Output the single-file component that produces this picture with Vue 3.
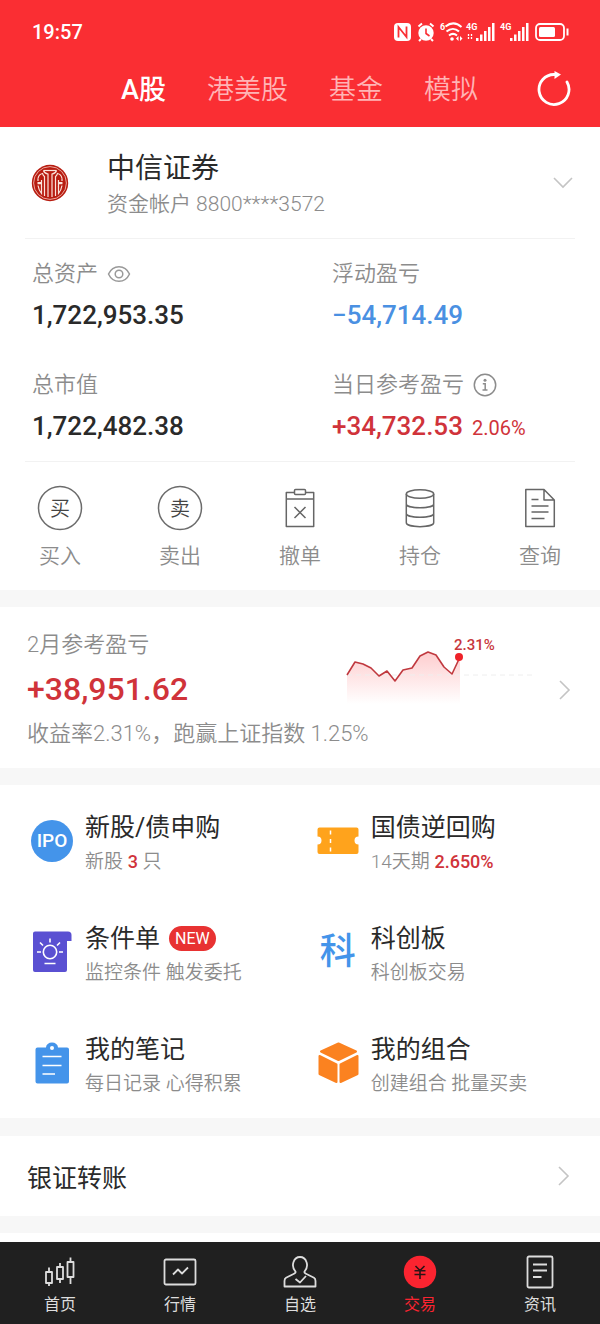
<script setup>
import { ref } from 'vue'

const markets = ['A股', '港美股', '基金', '模拟']
const market = ref('A股')

const actions = [
  { id: 'buy', label: '买入', glyph: '买' },
  { id: 'sell', label: '卖出', glyph: '卖' },
  { id: 'cancel', label: '撤单' },
  { id: 'hold', label: '持仓' },
  { id: 'query', label: '查询' },
]

const services = [
  { id: 'ipo', title: '新股/债申购', parts: [{ t: '新股 ' }, { t: '3', hot: true }, { t: ' 只' }] },
  { id: 'repo', title: '国债逆回购', parts: [{ t: '14天期 ' }, { t: '2.650%', hot: true }] },
  { id: 'cond', title: '条件单', badge: 'NEW', parts: [{ t: '监控条件 触发委托' }] },
  { id: 'star', title: '科创板', parts: [{ t: '科创板交易' }] },
  { id: 'note', title: '我的笔记', parts: [{ t: '每日记录 心得积累' }] },
  { id: 'combo', title: '我的组合', parts: [{ t: '创建组合 批量买卖' }] },
]

const navs = [
  { id: 'home', label: '首页' },
  { id: 'quote', label: '行情' },
  { id: 'fav', label: '自选' },
  { id: 'trade', label: '交易' },
  { id: 'news', label: '资讯' },
]
const current = ref('trade')
</script>

<template>
  <div class="page">
    <header class="top">
      <div class="status">
        <span class="time">19:57</span>
        <svg class="status-icons" width="178" height="22" viewBox="0 0 178 22" aria-hidden="true">
          <rect x="1" y="2" width="17" height="18" rx="4" fill="#fff" />
          <path d="M5.500 16.500V6L13.500 16V5.500" fill="none" stroke="#fa2e33" stroke-width="1.800" />
          <circle cx="33" cy="12" r="7.700" fill="#fff" />
          <path d="M25.500 5.500l3.500-3M40.500 5.500l-3.500-3M28 18l-2 2M38 18l2 2" stroke="#fff" stroke-width="2" fill="none" />
          <path d="M33 7.500V12.500l3.500 2.500" stroke="#fa2e33" stroke-width="1.600" fill="none" />
          <text x="47" y="9" class="tiny">6</text>
          <g fill="none" stroke="#fff" stroke-width="2">
            <path d="M52.500 5.500c5-4 11-4 16 .500" />
            <path d="M53.500 10.500c4-3.500 9-3.500 12.500 0" />
            <path d="M56 14.500c2.500-2 5.500-2 8 0" />
          </g>
          <circle cx="59" cy="18" r="1.800" fill="#fff" />
          <path d="M63 17.500l2.500-2.500v5zM69.500 17.500L67 15v5z" fill="#fff" />
          <text x="73" y="9" class="tiny">4G</text>
          <path d="M75.500 13v6M78.500 13v6" stroke="#fff" stroke-width="1.300" stroke-dasharray="2 1" />
          <g fill="#fff">
            <rect x="83" y="17" width="2.500" height="3" /><rect x="87" y="13.500" width="2.500" height="6.500" />
            <rect x="91" y="10" width="2.500" height="10" /><rect x="95" y="6" width="2.500" height="14" />
            <rect x="99" y="2" width="2.500" height="18" />
            <rect x="117" y="17" width="2.500" height="3" /><rect x="121" y="13.500" width="2.500" height="6.500" />
            <rect x="125" y="10" width="2.500" height="10" /><rect x="129" y="6" width="2.500" height="14" />
            <rect x="133" y="2" width="2.500" height="18" />
          </g>
          <text x="107" y="9" class="tiny">4G</text>
          <rect x="143" y="3" width="28" height="16" rx="4" fill="none" stroke="#fff" stroke-width="1.800" />
          <rect x="146" y="6" width="16" height="10" rx="1.500" fill="#fff" />
          <path d="M174.500 7.500v7" stroke="#fff" stroke-width="2" />
        </svg>
      </div>
      <div class="tabs">
        <button
          v-for="m in markets"
          :key="m"
          type="button"
          class="tab"
          :class="{ on: m === market }"
          @click="market = m"
        >{{ m }}</button>
        <button type="button" class="refresh" aria-label="刷新">
          <svg width="36" height="38" viewBox="0 0 36 38" aria-hidden="true">
            <path d="M31 11A15 15 0 1 1 18.500 3.500" fill="none" stroke="#fff" stroke-width="2.800" stroke-linecap="round" />
            <path d="M18.500 0l6.500 3.500-6.500 4.400z" fill="#fff" />
          </svg>
        </button>
      </div>
    </header>

    <main class="body">
      <section class="card">
        <button type="button" class="account">
          <svg class="logo" width="38" height="38" viewBox="0 0 38 38" aria-hidden="true">
            <circle cx="19" cy="19" r="18.200" fill="#b81c10" />
            <circle cx="19" cy="19" r="16.400" fill="none" stroke="#eeb8ae" stroke-width=".900" />
            <g fill="none" stroke="#fbe4dc" stroke-width="1.200">
              <path d="M12.500 6.500c.500 2 1.500 3 4.500 3.500V33M25.500 6.500c-.500 2-1.500 3-4.500 3.500V33" />
              <path d="M12.500 6.500h13" />
              <path d="M7 14.500c.500-3 2-4.500 4.500-5 .700 2 1.200 2.500 2 3V32M31 14.500c-.500-3-2-4.500-4.500-5-.700 2-1.200 2.500-2 3V32" />
              <path d="M7 14.500v2.500M7 21.500c.500 3 1.500 5.500 3.500 8V22M31 14.500v2.500M31 21.500c-.500 3-1.500 5.500-3.500 8V22" />
              <path d="M6.500 19.200h4.500M27 19.200h4.500" stroke-width="2.200" />
              <path d="M10.500 16v6.500M27.500 16v6.500" />
            </g>
          </svg>
          <span class="who">
            <span class="broker">中信证券</span>
            <span class="acct">资金帐户 8800****3572</span>
          </span>
          <svg class="chev-down" width="20" height="12" viewBox="0 0 20 12" aria-hidden="true">
            <path d="M1 1l9 9 9-9" fill="none" stroke="#c4c4c4" stroke-width="1.600" />
          </svg>
        </button>

        <dl class="assets">
          <div class="asset">
            <dt>总资产
              <svg width="24" height="18" viewBox="0 0 24 18" aria-hidden="true">
                <g fill="none" stroke="#999" stroke-width="1.500">
                  <path d="M1.500 9C6-.800 18-.800 22.500 9 18 18.800 6 18.800 1.500 9z" /><circle cx="12" cy="9" r="3.800" />
                </g>
              </svg>
            </dt>
            <dd>1,722,953.35</dd>
          </div>
          <div class="asset">
            <dt>浮动盈亏</dt>
            <dd class="down">−54,714.49</dd>
          </div>
          <div class="asset">
            <dt>总市值</dt>
            <dd>1,722,482.38</dd>
          </div>
          <div class="asset">
            <dt>当日参考盈亏
              <svg width="24" height="24" viewBox="0 0 24 24" aria-hidden="true">
                <circle cx="12" cy="12" r="10.700" fill="none" stroke="#8c8c8c" stroke-width="1.500" />
                <circle cx="12" cy="7.200" r="1.500" fill="#8c8c8c" />
                <path d="M9.800 10.800h2.400v6.200M9.500 17h5" fill="none" stroke="#8c8c8c" stroke-width="1.500" />
              </svg>
            </dt>
            <dd class="up">+34,732.53<small>2.06%</small></dd>
          </div>
        </dl>

        <div class="actions">
          <button v-for="a in actions" :key="a.id" type="button" class="action">
            <svg width="46" height="46" viewBox="0 0 46 46" aria-hidden="true">
              <g v-if="a.glyph">
                <circle cx="23" cy="23" r="21.500" fill="none" stroke="#6c6c6c" stroke-width="1.500" />
                <text x="23" y="31" text-anchor="middle" class="ring-text">{{ a.glyph }}</text>
              </g>
              <g v-else fill="none" stroke="#666" stroke-width="1.500" stroke-linejoin="round">
                <template v-if="a.id === 'cancel'">
                  <path d="M17.500 7.500H9.300v34h27.400v-34H28.500M9.300 14h27.400" />
                  <rect x="17.500" y="4.500" width="11" height="5" rx="1" />
                  <path d="M17.500 22l11 11M28.500 22l-11 11" />
                </template>
                <template v-else-if="a.id === 'hold'">
                  <ellipse cx="23" cy="9" rx="13.700" ry="4.200" />
                  <path d="M9.300 9v28.500c0 5.500 27.400 5.500 27.400 0V9M9.300 19c0 5 27.400 5 27.400 0M9.300 28.500c0 5 27.400 5 27.400 0" />
                </template>
                <template v-else>
                  <path d="M27 4.500H8.800v37h28.500V15zM27 4.500V15h10.300" />
                  <path d="M14.500 14.500h7M14.500 21h17M14.500 27h17M14.500 33.500h13" />
                </template>
              </g>
            </svg>
            <span class="action-label">{{ a.label }}</span>
          </button>
        </div>
      </section>

      <section class="card">
        <a href="#month" class="month">
          <span class="m-label">2月参考盈亏</span>
          <strong class="m-value">+38,951.62</strong>
          <span class="m-note">收益率2.31%，跑赢上证指数 1.25%</span>
          <svg class="spark" width="192" height="76" viewBox="0 0 192 76" role="img" aria-label="本月收益走势">
            <defs>
              <linearGradient id="fade" x1="0" y1="0" x2="0" y2="1">
                <stop offset="0" stop-color="#fa2e33" stop-opacity=".240" />
                <stop offset="1" stop-color="#fa2e33" stop-opacity="0" />
              </linearGradient>
            </defs>
            <path d="M1 45L9 32l8 2 8 4 8 8 8-5 8 10 8-11 9-2 8-12 8-4 8 3 8 12 8 7 8-17V74H1z" fill="url(#fade)" />
            <path d="M1 45H190" stroke="#eee" stroke-width="1" stroke-dasharray="5 4" />
            <path d="M1 45L9 32l8 2 8 4 8 8 8-5 8 10 8-11 9-2 8-12 8-4 8 3 8 12 8 7 8-17" fill="none" stroke="#c0393f" stroke-width="1.600" stroke-linejoin="round" />
            <circle cx="113" cy="27" r="4" fill="#ee2229" />
            <text x="108" y="20" class="spark-text">2.31%</text>
          </svg>
          <svg class="chev" width="12" height="20" viewBox="0 0 12 20" aria-hidden="true">
            <path d="M1 1l9 9-9 9" fill="none" stroke="#c4c4c4" stroke-width="1.600" />
          </svg>
        </a>
      </section>

      <section class="card services">
        <a v-for="s in services" :key="s.id" :href="'#' + s.id" class="service">
          <span v-if="s.id === 'ipo'" class="s-icon ipo" aria-hidden="true">IPO</span>
          <span v-else-if="s.id === 'star'" class="s-icon ke" aria-hidden="true">科</span>
          <svg v-else class="s-icon" width="42" height="42" viewBox="0 0 42 42" aria-hidden="true">
            <template v-if="s.id === 'repo'">
              <path d="M2.500 7.500h37a2 2 0 0 1 2 2v7a4 4 0 0 0 0 8v7.500a2 2 0 0 1-2 2h-37a2 2 0 0 1-2-2v-7.500a4 4 0 0 0 0-8v-7a2 2 0 0 1 2-2z" fill="#ffa31c" />
              <path d="M13.500 10.500v22" stroke="#fff" stroke-width="1.500" stroke-dasharray="4 4.500" />
            </template>
            <template v-else-if="s.id === 'cond'">
              <path d="M4 .500h33a3.500 3.500 0 0 1 3.500 3.500v6H36v29a2 2 0 0 1-2 2H4a2 2 0 0 1-2-2v-36.500a2 2 0 0 1 2-2z" fill="#5a50d2" />
              <g fill="none" stroke="#fff" stroke-width="1.600">
                <circle cx="19" cy="21" r="6.700" />
                <path d="M19 7.500v4M6 21h4M28 21h4M9 11.500l3 3M29 11.500l-3 3M13.500 32.500h11" />
              </g>
            </template>
            <template v-else-if="s.id === 'note'">
              <path d="M6.500 5.500H15a6 5 0 0 1 12 0h9a2 2 0 0 1 2 2v32a2 2 0 0 1-2 2h-29.500a2 2 0 0 1-2-2v-32a2 2 0 0 1 2-2z" fill="#4494ea" />
              <circle cx="21" cy="6" r="2" fill="#fff" />
              <path d="M11.500 14.500h19M11.500 23.500h19M11.500 32h12.500" stroke="#fff" stroke-width="1.600" />
            </template>
            <template v-else>
              <g fill="#fb8220" stroke="#fb8220" stroke-width="2" stroke-linejoin="round">
                <path d="M21.500 1.500L39 9.500 21.500 18 4 9.500z" />
                <path d="M2.500 14L19.500 22.500v17.500L2.500 32z" />
                <path d="M40.500 14L23.500 22.500v17.500l17-8z" />
              </g>
            </template>
          </svg>
          <span class="s-text">
            <span class="s-title">{{ s.title }}<em v-if="s.badge" class="badge">{{ s.badge }}</em></span>
            <span class="s-sub"><span v-for="(p, i) in s.parts" :key="i" :class="{ hot: p.hot }">{{ p.t }}</span></span>
          </span>
        </a>
      </section>

      <section class="card">
        <a href="#transfer" class="transfer">
          <span>银证转账</span>
          <svg width="12" height="20" viewBox="0 0 12 20" aria-hidden="true">
            <path d="M1 1l9 9-9 9" fill="none" stroke="#c4c4c4" stroke-width="1.600" />
          </svg>
        </a>
      </section>

      <div class="card next"></div>
    </main>

    <nav class="nav">
      <button
        v-for="n in navs"
        :key="n.id"
        type="button"
        class="nav-item"
        :class="{ on: n.id === current }"
        @click="current = n.id"
      >
        <svg width="34" height="34" viewBox="0 0 34 34" aria-hidden="true">
          <g fill="none" stroke="currentColor" stroke-width="1.800" stroke-linejoin="round">
            <template v-if="n.id === 'home'">
              <rect x="3" y="17" width="6" height="11" /><path d="M6 12.500V17M6 28v3" />
              <rect x="14" y="12" width="6" height="12" /><path d="M17 8v4M17 24v4" />
              <rect x="24.500" y="7" width="6" height="15" /><path d="M27.500 2.500V7M27.500 22v7" />
            </template>
            <template v-else-if="n.id === 'quote'">
              <rect x="1.500" y="4.500" width="31" height="25" rx="1.500" />
              <path d="M10 19.500l5-5 4 4 6-6" />
            </template>
            <template v-else-if="n.id === 'fav'">
              <path d="M12.500 16.500C7.500 11 10.500 2 17 2s9.500 9 4.500 14.500c-.500 1.500 1 2.300 3 3l6.500 3.200c1.300.700 1.500 2 1.500 3.300v5.500h-31V26c0-1.300.200-2.600 1.500-3.300L9.500 19.500c2-.700 3.500-1.500 3-3z" />
              <path d="M12.500 24l4.500 3.500 6-6.500" />
            </template>
            <template v-else-if="n.id === 'news'">
              <rect x="4.500" y="1.500" width="25" height="31" rx="1.500" />
              <path d="M10 9.500h14M10 15.500h14M10 22h8.500" />
            </template>
            <template v-else>
              <circle cx="17" cy="17" r="16.200" fill="#fb2430" stroke="none" />
              <path d="M12.500 11l4.500 4.500 4.500-4.500M17 15.500v8.500M11.500 15.700h11M11.500 19.500h11" stroke="#2a1416" stroke-width="1.600" />
            </template>
          </g>
        </svg>
        <span>{{ n.label }}</span>
      </button>
    </nav>
  </div>
</template>

<style>
body {
  margin: 0;
  background: #f7f7f7;
}
</style>

<style scoped>
.page {
  display: flex;
  flex-direction: column;
  min-height: 100vh;
  font-family: Roboto, "Noto Sans CJK SC", sans-serif;
  color: #2a2a2a;
  background: #f7f7f7;
}
button {
  margin: 0;
  padding: 0;
  border: 0;
  background: none;
  font: inherit;
  color: inherit;
  cursor: pointer;
}
a {
  color: inherit;
  text-decoration: none;
}
svg {
  display: block;
  flex: none;
}
.top {
  background: #fa2e33;
  color: #fff;
}
.status {
  display: flex;
  justify-content: space-between;
  align-items: center;
  height: 24px;
  padding: 20px 29px 0 32px;
}
.time {
  font-size: 20px;
  font-weight: 500;
}
.tiny {
  font-size: 9px;
  font-weight: 700;
  fill: #fff;
}
.tabs {
  display: flex;
  align-items: center;
  gap: 41px;
  height: 83px;
  padding: 8px 28px 0 121px;
  box-sizing: border-box;
}
.tab {
  font-size: 27px;
  line-height: 40px;
  color: #ffb4b5;
  font-weight: 350;
}
.tab.on {
  color: #fff;
  font-weight: 500;
}
.refresh {
  margin-left: auto;
}
.card {
  background: #fff;
}
.body {
  flex: 1;
  display: flex;
  flex-direction: column;
  gap: 17px;
}
.account {
  display: flex;
  align-items: center;
  width: 100%;
  height: 111px;
  padding: 0 27px 0 31px;
  text-align: left;
}
.who {
  flex: 1;
  display: flex;
  flex-direction: column;
  gap: 2px;
  padding: 5px 0 0 38px;
}
.broker {
  font-size: 28px;
  line-height: 36px;
}
.acct {
  font-size: 21px;
  line-height: 30px;
  color: #8c8c8c;
  font-weight: 350;
}
.assets {
  display: grid;
  grid-template-columns: 1fr 1fr;
  row-gap: 39px;
  margin: 0 25px;
  padding: 20px 0 17px;
  border: solid #f2f2f2;
  border-width: 1px 0;
}
.asset {
  padding-left: 7px;
}
.asset:nth-child(even) {
  padding-left: 32px;
}
.asset dt {
  display: flex;
  align-items: center;
  gap: 9px;
  font-size: 22px;
  line-height: 30px;
  color: #8c8c8c;
  font-weight: 350;
}
.asset dd {
  margin: 10px 0 0;
  font-size: 26px;
  line-height: 32px;
  font-weight: 500;
  white-space: nowrap;
}
.asset dd.down {
  color: #4a90e2;
}
.asset dd.up {
  color: #d0333a;
}
.asset small {
  margin-left: 9px;
  font-size: 20px;
  font-weight: 400;
}
.actions {
  display: grid;
  grid-template-columns: repeat(5, 1fr);
  padding: 23px 0 20px;
}
.action {
  display: flex;
  flex-direction: column;
  align-items: center;
  gap: 11px;
}
.ring-text {
  font-size: 20px;
  font-weight: 350;
  fill: #444;
}
.action-label {
  font-size: 21px;
  line-height: 28px;
  color: #8c8c8c;
  font-weight: 350;
}
.month {
  display: grid;
  grid-template-columns: 1fr 192px 12px;
  column-gap: 21px;
  padding: 23px 29px 19px 27px;
}
.m-label,
.m-note {
  font-size: 22px;
  line-height: 30px;
  color: #8c8c8c;
  font-weight: 350;
}
.m-value {
  margin: 11px 0 12px;
  grid-row: 2;
  font-size: 32px;
  line-height: 36px;
  font-weight: 500;
  color: #d0333a;
}
.m-note {
  grid-row: 3;
  grid-column: 1 / 3;
}
.spark {
  grid-row: 1 / 3;
  grid-column: 2;
}
.spark-text {
  font-size: 15px;
  font-weight: 500;
  fill: #c8373d;
}
.chev {
  grid-row: 1 / 4;
  grid-column: 3;
  align-self: center;
}
.services {
  display: grid;
  grid-template-columns: 10fr 11fr;
  margin-bottom: 1px;
}
.service {
  display: flex;
  align-items: center;
  gap: 12px;
  height: 111px;
  padding-left: 31px;
}
.s-icon {
  flex: none;
  width: 42px;
  height: 42px;
}
.ipo {
  display: flex;
  align-items: center;
  justify-content: center;
  border-radius: 50%;
  background: #4494ea;
  color: #fff;
  font-size: 19px;
  font-weight: 500;
}
.ke {
  display: flex;
  align-items: center;
  justify-content: center;
  color: #4494ea;
  font-size: 36px;
  line-height: 42px;
  font-weight: 500;
}
.s-text {
  display: flex;
  flex-direction: column;
  gap: 5px;
  padding-top: 5px;
}
.s-title {
  display: flex;
  align-items: center;
  gap: 9px;
  font-size: 25px;
  line-height: 32px;
}
.badge {
  padding: 0 6px;
  border-radius: 13px;
  background: #e83232;
  color: #fff;
  font-size: 16px;
  line-height: 25px;
  font-style: normal;
}
.s-sub {
  font-size: 19px;
  line-height: 26px;
  color: #8c8c8c;
  font-weight: 350;
  white-space: pre;
}
.hot {
  color: #d0333a;
  font-size: 18px;
  font-weight: 500;
}
.transfer {
  display: flex;
  align-items: center;
  justify-content: space-between;
  height: 80px;
  padding: 0 30px 0 27px;
  font-size: 25px;
}
.next {
  flex: 1;
  min-height: 8px;
}
.nav {
  position: sticky;
  bottom: 0;
  display: grid;
  grid-template-columns: repeat(5, 1fr);
  height: 82px;
  background: #202020;
  color: #ddd;
}
.nav-item {
  display: flex;
  flex-direction: column;
  align-items: center;
  gap: 5px;
  padding-top: 13px;
  font-size: 16px;
  line-height: 22px;
}
.nav-item.on {
  color: #fb2430;
}
</style>
